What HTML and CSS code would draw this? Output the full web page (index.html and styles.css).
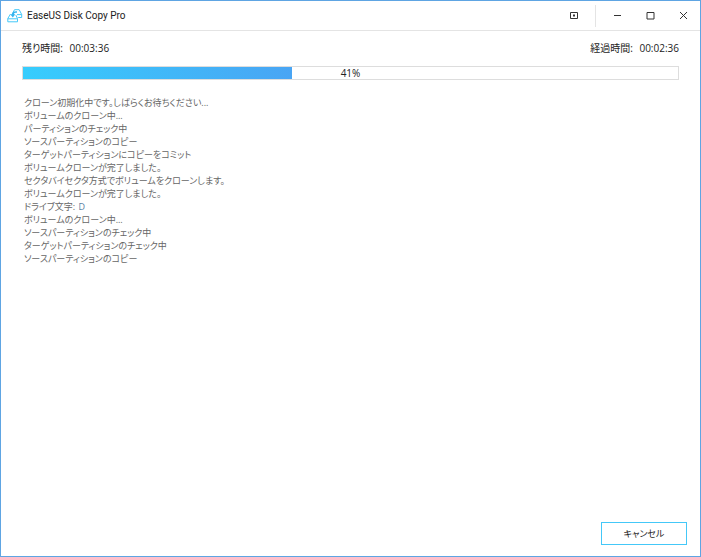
FILE: index.html
```html
<!DOCTYPE html>
<html lang="ja">
<head>
  <meta charset="UTF-8">
  <meta name="viewport" content="width=device-width, initial-scale=1.0">
  <title>EaseUS Disk Copy Pro</title>
  <link rel="stylesheet" href="styles.css">
</head>
<body>
  <div class="window">
    <header class="titlebar">
      <svg class="logo" viewBox="0 0 16 14" aria-hidden="true">
        <path class="disk" d="M6 3.500 7.500.7h4.700l2.500 4.800v3h-3.500"/>
        <path class="disk" d="M10 5.600h4.700"/>
        <path class="disk" d="M3.500 5 .8 9.500v3.300h9.700V9.500L8.800 6"/>
        <path class="disk" d="M.8 9.800h9.700"/>
        <path class="arrow" d="M10 2.200C6.500 2 5 3 4.800 5.200H3.300l2.500 3.300L8.300 5.200H6.900C7 4.300 7.800 3.800 10 3.800z"/>
      </svg>
      <h1 class="title">EaseUS Disk Copy Pro</h1>
      <div class="window-buttons">
        <button type="button" class="menu-button" aria-label="メニュー">
          <svg viewBox="0 0 9 9"><path d="M1.500 1.500h7v6h-7z"/><path class="solid" d="M4 3.500h2v2H4z"/></svg>
        </button>
        <button type="button" aria-label="最小化">
          <svg viewBox="0 0 9 9"><path d="M1 4.500h7"/></svg>
        </button>
        <button type="button" aria-label="最大化">
          <svg viewBox="0 0 9 9"><path d="M1 1.500h7v6.500H1z"/></svg>
        </button>
        <button type="button" aria-label="閉じる">
          <svg viewBox="0 0 9 9"><path d="M1 1l7 7M8 1 1 8"/></svg>
        </button>
      </div>
    </header>

    <main class="content">
      <div class="times">
        <p>残り時間: <span class="clock">00:03:36</span></p>
        <p>経過時間: <span class="clock">00:02:36</span></p>
      </div>

      <div class="progress" role="progressbar" aria-label="進行状況" aria-valuemin="0" aria-valuemax="100" aria-valuenow="41">
        <div class="progress-fill" style="width: 41%"></div>
        <span class="progress-label">41%</span>
      </div>

      <ul class="log">
        <li>クローン初期化中です。しばらくお待ちください...</li>
        <li>ボリュームのクローン中...</li>
        <li>パーティションのチェック中</li>
        <li>ソースパーティションのコピー</li>
        <li>ターゲットパーティションにコピーをコミット</li>
        <li>ボリュームクローンが完了しました。</li>
        <li>セクタバイセクタ方式でボリュームをクローンします。</li>
        <li>ボリュームクローンが完了しました。</li>
        <li>ドライブ文字: <span class="drive">D</span></li>
        <li>ボリュームのクローン中...</li>
        <li>ソースパーティションのチェック中</li>
        <li>ターゲットパーティションのチェック中</li>
        <li>ソースパーティションのコピー</li>
      </ul>
    </main>

    <footer class="footer">
      <button type="button" class="cancel">キャンセル</button>
    </footer>
  </div>
</body>
</html>
```

FILE: styles.css
```css
:root {
  --frame: #5ea5e3;
  --accent: #44c8f8;
  --text: #222;
  --text-muted: #666;
  --line: #e4e4e4;
}

* {
  margin: 0;
  padding: 0;
  box-sizing: border-box;
}

body {
  font-family: "Open Sans", "Noto Sans CJK JP", sans-serif;
  font-size: 10px;
  line-height: 13px;
  font-feature-settings: "palt";
  color: var(--text);
  background: #fff;
}

button {
  font: inherit;
  color: inherit;
  background: none;
  border: none;
  cursor: pointer;
}

.window {
  display: flex;
  flex-direction: column;
  min-height: 100vh;
  border: 1px solid var(--frame);
}

/* Title bar */
.titlebar {
  display: flex;
  align-items: center;
  height: 30px;
  padding-left: 6px;
  border-bottom: 1px solid var(--line);
}

.logo {
  width: 16px;
  height: 14px;
}

.disk {
  fill: none;
  stroke: var(--accent);
}

.arrow {
  fill: #35b4ee;
}

.title {
  margin-left: 4px;
  font-family: Roboto, sans-serif;
  font-size: 10px;
  font-weight: 400;
}

.window-buttons {
  display: flex;
  margin-left: auto;
}

.window-buttons button {
  display: flex;
  align-items: center;
  justify-content: center;
  width: 33px;
  height: 22px;
}

.window-buttons .menu-button {
  width: 45px;
  margin-right: 5px;
  border-right: 1px solid var(--line);
}

.window-buttons svg {
  width: 9px;
  height: 9px;
  fill: none;
  stroke: #333;
}

.window-buttons .solid {
  fill: #333;
  stroke: none;
}

/* Progress */
.content {
  flex: 1;
  padding: 11px 21px;
}

.times {
  display: flex;
  justify-content: space-between;
  margin-bottom: 11px;
}

.clock {
  margin-left: 4px;
}

.progress {
  position: relative;
  height: 14px;
  border: 1px solid #ddd;
}

.progress-fill {
  height: 100%;
  background: linear-gradient(to right, #37cdfd, #49a5f4);
}

.progress-label {
  position: absolute;
  inset: 0;
  line-height: 12px;
  text-align: center;
}

.log {
  margin-top: 16px;
  padding-left: 2px;
  list-style: none;
  font-size: 9px;
  color: var(--text-muted);
}

.drive {
  margin-left: 1px;
  color: #5d7fa3;
}

/* Footer */
.footer {
  display: flex;
  justify-content: flex-end;
  padding: 11px 13px;
}

.cancel {
  width: 86px;
  height: 23px;
  border: 1px solid var(--accent);
  font-size: 9px;
}
```
